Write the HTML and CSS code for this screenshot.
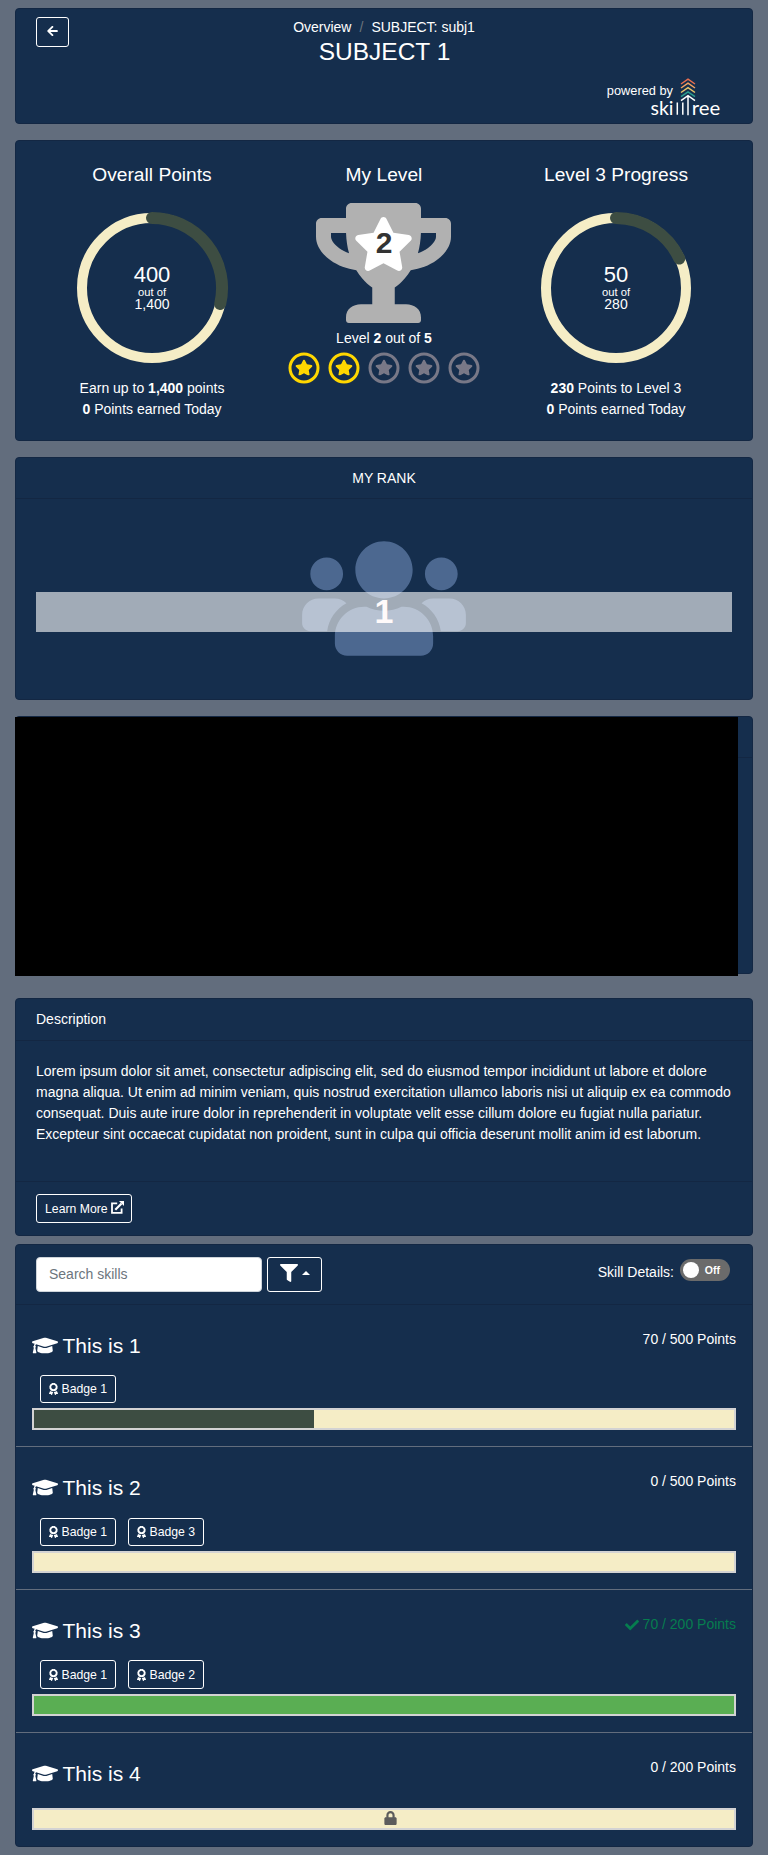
FILE: index.html
```html
<!DOCTYPE html>
<html lang="en">
<head>
<meta charset="utf-8">
<title>SUBJECT 1</title>
<link rel="stylesheet" href="styles.css">
</head>
<body>
<svg class="defs" aria-hidden="true">
  <symbol id="cap" viewBox="0 0 640 512"><path d="M622.34 153.2L343.4 67.5c-15.2-4.67-31.6-4.67-46.79 0L17.66 153.2c-23.54 7.23-23.54 38.36 0 45.59l48.63 14.94c-10.67 13.19-17.23 29.28-17.88 46.9C38.78 266.15 32 276.11 32 288c0 10.78 5.68 19.85 13.86 25.65L20.33 428.53C18.11 438.52 25.71 448 35.94 448h56.11c10.24 0 17.84-9.48 15.62-19.47L82.14 313.65C90.32 307.85 96 298.78 96 288c0-11.57-6.47-21.25-15.66-26.87.76-15.02 8.44-28.3 20.69-36.72L296.6 284.5c9.06 2.78 26.44 6.25 46.79 0l278.95-85.7c23.55-7.24 23.55-38.36 0-45.6zM352.79 315.09c-28.53 8.76-52.84 3.92-65.59 0l-145.02-44.55L128 384c0 35.35 85.96 64 192 64s192-28.65 192-64l-14.18-113.47-145.03 44.56z"/></symbol>
  <symbol id="award" viewBox="0 0 384 512"><path d="M97.12 362.63c-8.69-8.69-4.16-6.24-25.12-11.85-9.51-2.55-17.87-7.45-25.43-13.32L1.2 448.7c-4.39 10.77 3.81 22.47 15.43 22.03l52.69-2.01L105.56 507c8 8.44 22.04 5.81 26.43-4.96l52.05-127.62c-10.84 6.04-22.87 9.58-35.31 9.58-19.5 0-37.82-7.59-51.61-21.37zM382.8 448.7l-45.37-111.24c-7.56 5.88-15.92 10.77-25.43 13.32-21.07 5.64-16.45 3.18-25.12 11.85-13.79 13.78-32.12 21.37-51.62 21.37-12.44 0-24.47-3.55-35.31-9.58L252 502.04c4.39 10.77 18.44 13.4 26.43 4.96l36.25-38.28 52.69 2.01c11.62.44 19.82-11.27 15.43-22.03zM263 340c15.28-15.55 17.03-14.21 38.79-20.14 13.89-3.79 24.75-14.84 28.47-28.98 7.48-28.4 5.54-24.97 25.95-45.75 10.17-10.35 14.14-25.44 10.42-39.58-7.47-28.38-7.48-24.42 0-52.83 3.72-14.14-.25-29.23-10.42-39.58-20.41-20.78-18.47-17.36-25.95-45.75-3.72-14.14-14.58-25.19-28.47-28.98-27.88-7.61-24.52-5.62-44.95-26.41-10.17-10.35-25-14.4-38.89-10.61-27.87 7.6-23.98 7.61-51.9 0-13.89-3.79-28.72.25-38.89 10.61-20.41 20.78-17.05 18.8-44.94 26.41-13.89 3.79-24.75 14.84-28.47 28.98-7.47 28.39-5.54 24.97-25.95 45.75-10.17 10.35-14.15 25.44-10.42 39.58 7.47 28.36 7.48 24.4 0 52.82-3.72 14.14.25 29.23 10.42 39.59 20.41 20.78 18.47 17.35 25.95 45.75 3.72 14.14 14.58 25.19 28.47 28.98C104.6 325.96 106.27 325 121 340c13.23 13.47 33.84 15.88 49.74 5.82a39.676 39.676 0 0 1 42.53 0c15.89 10.06 36.5 7.65 49.73-5.82zM97.66 175.96c0-53.03 42.24-96.02 94.34-96.02s94.34 42.99 94.34 96.02-42.24 96.02-94.34 96.02-94.34-42.99-94.34-96.02z"/></symbol>
  <symbol id="star" viewBox="0 0 576 512"><path d="M259.3 17.8L194 150.2 47.9 171.5c-26.2 3.8-36.7 36.1-17.7 54.6l105.7 103-25 145.5c-4.5 26.3 23.2 46 46.4 33.7L288 439.6l130.7 68.7c23.2 12.2 50.9-7.4 46.4-33.7l-25-145.5 105.7-103c19-18.5 8.5-50.8-17.7-54.6L382 150.2 316.7 17.8c-11.7-23.6-45.6-23.9-57.4 0z"/></symbol>
  <symbol id="medal" viewBox="0 0 32 32"><circle cx="16" cy="16" r="14" fill="none" stroke="currentColor" stroke-width="3"/><use href="#star" x="7" y="7.6" width="18" height="16"/></symbol>
</svg>

<header class="card head">
  <div class="head-row">
    <button class="btn back" aria-label="Back"><svg viewBox="0 0 448 512"><path d="M257.5 445.1l-22.2 22.2c-9.4 9.4-24.6 9.4-33.9 0L7 273c-9.4-9.4-9.4-24.6 0-33.9L201.4 44.7c9.4-9.4 24.6-9.4 33.9 0l22.2 22.2c9.5 9.5 9.3 25-.4 34.3L136.6 216H424c13.3 0 24 10.7 24 24v32c0 13.3-10.7 24-24 24H136.6l120.5 114.8c9.8 9.3 10 24.8.4 34.3z"/></svg></button>
    <div class="titles">
      <nav class="crumbs"><span>Overview</span><span class="slash">/</span><span>SUBJECT: subj1</span></nav>
      <h1>SUBJECT 1</h1>
    </div>
  </div>
  <div class="brand">
    <span class="powered">powered by</span>
    <svg class="logo" viewBox="0 0 72 40">
      <g fill="none" stroke-width="1.5">
        <path stroke="#e76f51" d="M31 7l7-4.9L45 7"/>
        <path stroke="#f4a261" d="M31 11l7-4.9 7 4.9"/>
        <path stroke="#e9c46a" d="M31 15.500l7-4.900 7 4.900"/>
        <path stroke="#2a9d8f" d="M31 19.700l7-4.900 7 4.900"/>
        <path stroke="#fff" d="M31 23.600l7-4.900 7 4.900M38 19v19.300M32.800 25.500v12.300M27.300 25.500v12.300"/>
      </g>
      <text x="0.500" y="37.900" textLength="23" lengthAdjust="spacingAndGlyphs">ski</text>
      <text x="41.800" y="37.900" textLength="28.500" lengthAdjust="spacingAndGlyphs">ree</text>
    </svg>
  </div>
</header>

<section class="card stats">
  <div class="stat">
    <h2>Overall Points</h2>
    <div class="ring">
      <svg viewBox="0 0 160 160"><circle class="track" cx="80" cy="80" r="70"/><path class="arc" d="M80 10A70 70 0 0 1 148.200 96"/></svg>
      <div class="ring-text"><b>400</b><small>out of</small><span>1,400</span></div>
    </div>
    <p>Earn up to <strong>1,400</strong> points</p>
    <p><strong>0</strong> Points earned Today</p>
  </div>
  <div class="stat">
    <h2>My Level</h2>
    <div class="trophy">
      <svg class="cup" viewBox="0 0 576 512"><path d="M552 64H448V24c0-13.300-10.700-24-24-24H152c-13.300 0-24 10.700-24 24v40H24C10.700 64 0 74.700 0 88v56c0 35.700 22.500 72.400 61.900 100.700 31.500 22.700 69.800 37.100 110 41.700C203.300 338.500 240 360 240 360v72h-48c-35.300 0-64 20.700-64 56v12c0 6.600 5.400 12 12 12h296c6.600 0 12-5.400 12-12v-12c0-35.300-28.700-56-64-56h-48v-72s36.700-21.500 68.100-73.600c40.300-4.600 78.600-19 110-41.700 39.300-28.300 61.900-65 61.900-100.700V88c0-13.300-10.700-24-24-24zM99.300 192.800C74.900 175.200 64 155.600 64 144v-16h64.200c1 32.600 5.800 61.200 12.800 86.200-15.100-5.200-29.200-12.400-41.700-21.400zM512 144c0 16.100-17.700 36.100-35.300 48.800-12.500 9-26.700 16.200-41.800 21.400 7-25 11.800-53.600 12.800-86.200H512v16z"/></svg>
      <svg class="cup-star"><use href="#star"/></svg>
      <span class="cup-num">2</span>
    </div>
    <p class="level">Level <strong>2</strong> out of <strong>5</strong></p>
    <div class="medals">
      <svg class="won"><use href="#medal"/></svg><svg class="won"><use href="#medal"/></svg><svg><use href="#medal"/></svg><svg><use href="#medal"/></svg><svg><use href="#medal"/></svg>
    </div>
  </div>
  <div class="stat">
    <h2>Level 3 Progress</h2>
    <div class="ring">
      <svg viewBox="0 0 160 160"><circle class="track" cx="80" cy="80" r="70"/><path class="arc" d="M80 10A70 70 0 0 1 143.300 50.500"/></svg>
      <div class="ring-text"><b>50</b><small>out of</small><span>280</span></div>
    </div>
    <p><strong>230</strong> Points to Level 3</p>
    <p><strong>0</strong> Points earned Today</p>
  </div>
</section>

<section class="card rank">
  <h3 class="card-head">MY RANK</h3>
  <div class="rank-body">
    <svg class="users" viewBox="0 0 640 512"><path d="M96 224c35.300 0 64-28.700 64-64s-28.700-64-64-64-64 28.700-64 64 28.700 64 64 64zm448 0c35.300 0 64-28.700 64-64s-28.700-64-64-64-64 28.700-64 64 28.700 64 64 64zm32 32h-64c-17.600 0-33.500 7.100-45.100 18.600 40.300 22.100 68.900 62 75.100 109.400h66c17.700 0 32-14.300 32-32v-32c0-35.300-28.700-64-64-64zm-256 0c61.900 0 112-50.100 112-112S381.900 32 320 32 208 82.100 208 144s50.100 112 112 112zm76.800 32h-8.300c-20.800 10-43.900 16-68.500 16s-47.600-6-68.500-16h-8.300C179.600 288 128 339.600 128 403.200V432c0 26.500 21.500 48 48 48h288c26.500 0 48-21.500 48-48v-28.800c0-63.600-51.600-115.200-115.200-115.200zm-223.700-13.400C161.500 263.100 145.600 256 128 256H64c-35.300 0-64 28.700-64 64v32c0 17.700 14.300 32 32 32h65.900c6.300-47.400 34.900-87.300 75.200-109.400z"/></svg>
    <div class="rank-band">1</div>
  </div>
</section>

<section class="card chart">
  <div class="card-head"></div>
  <div class="blackout"></div>
</section>

<section class="card about">
  <h3 class="card-head">Description</h3>
  <p class="lorem">Lorem ipsum dolor sit amet, consectetur adipiscing elit, sed do eiusmod tempor incididunt ut labore et dolore magna aliqua. Ut enim ad minim veniam, quis nostrud exercitation ullamco laboris nisi ut aliquip ex ea commodo consequat. Duis aute irure dolor in reprehenderit in voluptate velit esse cillum dolore eu fugiat nulla pariatur. Excepteur sint occaecat cupidatat non proident, sunt in culpa qui officia deserunt mollit anim id est laborum.</p>
  <div class="card-foot">
    <button class="btn learn">Learn More <svg viewBox="0 0 13 13"><path fill="none" stroke="currentColor" stroke-width="1.800" d="M6.200 2.300H1v9.600h9.600V7.400"/><path fill="none" stroke="currentColor" stroke-width="2.200" d="M4.300 8.700l6.200-6.200"/><path d="M8 0h5v5z"/></svg></button>
  </div>
</section>

<main class="card skills">
  <div class="toolbar">
    <input class="search" type="text" placeholder="Search skills">
    <button class="btn filter" aria-label="Filter"><svg class="funnel" viewBox="0 0 512 512"><path d="M487.976 0H24.028C2.710 0-8.047 25.866 7.058 40.971L192 225.941V432c0 7.831 3.821 15.170 10.237 19.662l80 55.980C298.020 518.690 320 507.493 320 487.980V225.941l184.947-184.970C520.021 25.896 509.338 0 487.976 0z"/></svg><i class="caret"></i></button>
    <span class="details">Skill Details:</span>
    <span class="toggle"><i></i><span>Off</span></span>
  </div>

  <article class="skill">
    <div class="skill-top"><h4><svg><use href="#cap"/></svg>This is 1</h4><span class="pts">70 / 500 Points</span></div>
    <div class="badges"><button class="btn badge"><svg><use href="#award"/></svg>Badge 1</button></div>
    <div class="bar"><div class="fill" style="width:280px"></div></div>
  </article>
  <article class="skill">
    <div class="skill-top"><h4><svg><use href="#cap"/></svg>This is 2</h4><span class="pts">0 / 500 Points</span></div>
    <div class="badges"><button class="btn badge"><svg><use href="#award"/></svg>Badge 1</button><button class="btn badge"><svg><use href="#award"/></svg>Badge 3</button></div>
    <div class="bar"></div>
  </article>
  <article class="skill">
    <div class="skill-top"><h4><svg><use href="#cap"/></svg>This is 3</h4><span class="pts done"><svg viewBox="0 0 512 512"><path d="M173.898 439.404l-166.400-166.400c-9.997-9.997-9.997-26.206 0-36.204l36.203-36.204c9.997-9.998 26.207-9.998 36.204 0L192 312.690 432.095 72.596c9.997-9.997 26.207-9.997 36.204 0l36.203 36.204c9.997 9.997 9.997 26.206 0 36.204l-294.400 294.401c-9.998 9.997-26.207 9.997-36.204-.001z"/></svg>70 / 200 Points</span></div>
    <div class="badges"><button class="btn badge"><svg><use href="#award"/></svg>Badge 1</button><button class="btn badge"><svg><use href="#award"/></svg>Badge 2</button></div>
    <div class="bar"><div class="fill complete"></div></div>
  </article>
  <article class="skill locked">
    <div class="skill-top"><h4><svg><use href="#cap"/></svg>This is 4</h4><span class="pts">0 / 200 Points</span></div>
    <div class="bar"><svg class="lock" viewBox="0 0 448 512"><path d="M400 224h-24v-72C376 68.200 307.800 0 224 0S72 68.200 72 152v72H48c-26.500 0-48 21.500-48 48v192c0 26.500 21.500 48 48 48h352c26.500 0 48-21.500 48-48V272c0-26.500-21.500-48-48-48zm-104 0H152v-72c0-39.700 32.300-72 72-72s72 32.300 72 72v72z"/></svg></div>
  </article>
</main>
</body>
</html>
```
FILE: styles.css
```css
* { box-sizing: border-box; }
body {
  margin: 0;
  padding: 8px 15px;
  min-height: 1855px;
  background: #626d7d;
  color: #fff;
  font: 14px/21px "Liberation Sans", Arial, sans-serif;
}
h1, h2, h3, h4, p { margin: 0; font-weight: 400; }
svg { fill: currentColor; flex: none; }
.defs { position: absolute; width: 0; height: 0; }
.card {
  background: #152e4d;
  border: 1px solid #132743;
  border-radius: 4px;
}
.card-head {
  height: 41px;
  padding: 10px 20px;
  font-size: 14px;
  border-bottom: 1px solid #132743;
}
.btn {
  display: flex;
  align-items: center;
  background: transparent;
  border: 1px solid #fff;
  border-radius: 3px;
  color: #fff;
  font: 12.250px/18px "Liberation Sans", Arial, sans-serif;
  padding: 0 8px;
}

/* Header */
.head { height: 116px; padding: 8px 20px 0; }
.head-row { display: flex; }
.back { width: 33px; height: 30px; padding: 0; justify-content: center; }
.back svg { width: 11px; height: 12px; margin-top: -2px; }
.titles { flex: 1; margin-right: 33px; text-align: center; }
.crumbs { display: flex; justify-content: center; line-height: 20px; }
.slash { color: #6c757d; margin: 0 8px; }
h1 { font-size: 24.500px; line-height: 30px; padding-left: 1px; }
.brand { display: flex; justify-content: flex-end; padding: 10px 10px 0 0; }
.powered { font-size: 12.800px; line-height: 26px; margin: 1px -23px 0 0; }
.logo { width: 72px; height: 40px; overflow: visible; }
.logo text { font: 19.500px Lato, sans-serif; }

/* Summary */
.stats { display: flex; height: 301px; margin-top: 16px; padding: 20px 20px 0; }
.stat { width: 232px; text-align: center; }
.stat:first-child, .stat:last-child { flex: 1; }
h2 { font-size: 19.200px; line-height: 27px; }
.ring { position: relative; width: 160px; height: 160px; margin: 20px auto 10px; }
.ring svg { width: 160px; height: 160px; display: block; }
.track { fill: none; stroke: #f5edc6; stroke-width: 10; }
.arc { fill: none; stroke: #3d4d42; stroke-width: 12; stroke-linecap: round; }
.ring-text {
  position: absolute;
  inset: 55px 0 auto;
  display: flex;
  flex-direction: column;
}
.ring-text b { font: 22px/24px "Liberation Sans", sans-serif; }
.ring-text small { font-size: 11.200px; line-height: 10px; }
.ring-text span { font-size: 14px; line-height: 15px; }
.trophy { position: relative; width: 136px; height: 120px; margin: 15px auto 0; }
.cup { width: 135px; height: 120px; display: block; color: #b1b1b1; }
.cup-star { position: absolute; left: 37px; top: 14px; width: 61px; height: 54px; }
.cup-num {
  position: absolute;
  inset: 25px 0 auto;
  color: #333;
  font-weight: 700;
  font-size: 30px;
  line-height: 30px;
}
.level { margin-top: 5px; }
.medals { display: flex; justify-content: center; gap: 8px; margin-top: 3px; color: #787887; }
.medals svg { width: 32px; height: 32px; }
.medals .won { color: #ffd700; }

/* Rank */
.rank { height: 243px; margin-top: 16px; }
.rank .card-head { text-align: center; }
.rank-body { position: relative; padding-top: 34px; }
.users { display: block; width: 164px; height: 131px; margin: 0 auto; color: #4c6890; }
.rank-band {
  position: absolute;
  inset: 93px 20px auto;
  height: 40px;
  background: rgba(255, 255, 255, .6);
  color: #fffafa;
  font-weight: 700;
  font-size: 34px;
  line-height: 38px;
  text-align: center;
}

/* Chart */
.chart { height: 258px; margin-top: 16px; position: relative; }
.blackout { position: absolute; left: -1px; top: 0; width: 723px; height: 259px; background: #000; }

/* Description */
.about { height: 238px; margin-top: 24px; }
.about .card-head { height: 42px; }
.lorem { height: 140px; padding: 20px 20px 0; }
.card-foot { border-top: 1px solid #132743; padding: 12px 20px; }
.learn { width: 96px; height: 29px; white-space: nowrap; }
.learn svg { width: 13px; height: 13px; margin-left: 3px; margin-top: -2px; }

/* Skills */
.skills { height: 603px; margin-top: 8px; }
.toolbar { display: flex; height: 60px; padding: 12px 22px 0 20px; border-bottom: 1px solid #132743; }
.search {
  width: 226px;
  height: 35px;
  padding: 0 12px 1px;
  border: 1px solid #ced4da;
  border-radius: 4px;
  background: #fff;
  font: 14px "Liberation Sans", Arial, sans-serif;
}
.search::placeholder { color: #6c757d; }
.filter { width: 55px; height: 35px; margin-left: 5px; padding: 0 11.500px; }
.funnel { width: 18px; height: 18px; margin-top: -4px; }
.caret { margin-left: 4px; border: 4px solid transparent; border-top: 0; border-bottom-color: #fff; margin-top: -3px; }
.details { margin: 5px 6px 0 auto; }
.toggle {
  display: flex;
  align-items: center;
  width: 50px;
  height: 22px;
  margin-top: 2px;
  padding: 0 10px 0 3px;
  border-radius: 11px;
  background: #6b6b6b;
  font: 700 10.500px/20px "Liberation Sans", sans-serif;
}
.toggle i { width: 16px; height: 16px; border-radius: 50%; background: #fff; margin-right: auto; }
.toggle span { margin-top: -1px; }
.skill { height: 143px; padding: 23px 16px 0; border-bottom: 1px solid #626d7d; }
.skill:first-of-type { height: 142px; }
.skill-top { display: flex; justify-content: space-between; height: 48px; }
.skill:nth-of-type(odd) .skill-top { height: 47px; }
h4 { display: flex; align-items: center; height: 34px; font-size: 21px; }
h4 svg { width: 26px; height: 21px; margin-right: 4.500px; }
.pts { display: flex; align-items: center; height: 23px; }
.done { color: #067d4f; }
.done svg { width: 14px; height: 14px; margin-right: 4px; }
.badges { display: flex; gap: 12px; padding-left: 8px; }
.badge { width: 76px; height: 28px; white-space: nowrap; padding: 0 7.500px; }
.skill:nth-of-type(3) .badge { height: 29px; }
.badge svg { width: 9px; height: 12px; margin-right: 4px; }
.bar { height: 22px; margin-top: 5px; border: 2px solid #d3d3d3; background: #f5edc6; }
.fill { height: 100%; background: #3d4d42; }
.complete { background: #5aae53; }
.locked { border: 0; }
.locked .bar { margin-top: 4px; }
.lock { display: block; width: 13px; height: 14px; margin: 1px 0 0 50%; color: #5c5c5c; }
```
